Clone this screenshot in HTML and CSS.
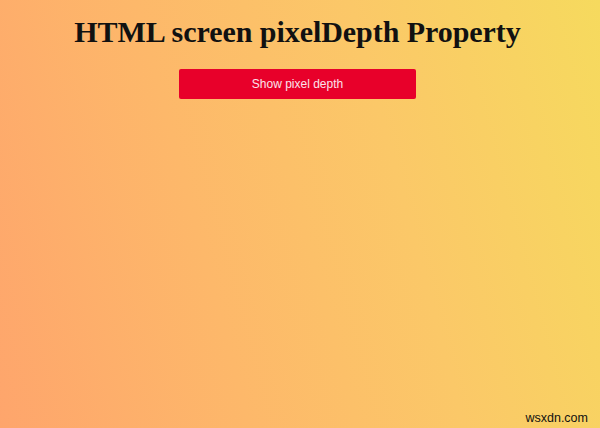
FILE: index.html
```html
<!DOCTYPE html>
<html>
<head>
<meta charset="utf-8">
<link rel="stylesheet" href="styles.css">
</head>
<body>
<main class="page">
  <h1 class="title">HTML screen pixelDepth Property</h1>
  <button class="btn" type="button">Show pixel depth</button>
</main>
<footer class="mark">wsxdn.com</footer>
</body>
</html>
```
FILE: styles.css
```css
html, body {
  margin: 0;
  height: 100%;
}
body {
  background: linear-gradient(75deg, #fea56c 0%, #fdb86a 35%, #fbc868 65%, #f6da5e 100%);
  font-family: "Liberation Serif", serif;
  position: relative;
  overflow: hidden;
}
.page {
  display: flex;
  flex-direction: column;
  align-items: center;
  padding-top: 14px;
  padding-right: 5px;
}
.title {
  margin: 0;
  font-size: 30px;
  font-weight: bold;
  color: #111;
  line-height: 36px;
  letter-spacing: -0.05px;
}
.btn {
  margin-top: 19px;
  width: 237px;
  height: 30px;
  border: none;
  border-radius: 2px;
  background: #e8002a;
  color: #fbe3ea;
  font-family: "Liberation Sans", Arial, sans-serif;
  font-size: 12px;
}
.mark {
  position: absolute;
  right: 12px;
  bottom: 3px;
  font-family: "Liberation Sans", Arial, sans-serif;
  font-size: 12.5px;
  color: #111;
}
```
